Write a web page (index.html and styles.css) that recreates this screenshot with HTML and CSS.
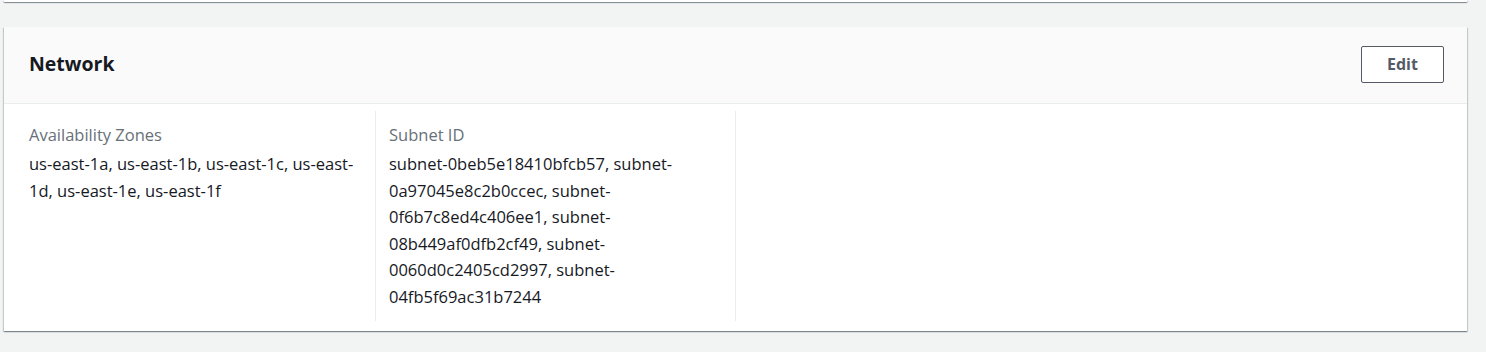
FILE: index.html
```html
<!DOCTYPE html>
<html lang="en">
<head>
<meta charset="utf-8">
<title>Network</title>
<link rel="stylesheet" href="styles.css">
</head>
<body>
<div class="page">
  <div class="prev-card"></div>
  <section class="card">
    <header class="card-header">
      <h2 class="card-title">Network</h2>
      <button class="btn" type="button">Edit</button>
    </header>
    <div class="card-body">
      <div class="col">
        <div class="label">Availability Zones</div>
        <div class="value">us-east-1a, us-east-1b, us-east-1c, us-east-1d, us-east-1e, us-east-1f</div>
      </div>
      <div class="col">
        <div class="label">Subnet ID</div>
        <div class="value">subnet-0beb5e18410bfcb57, subnet-0a97045e8c2b0ccec, subnet-0f6b7c8ed4c406ee1, subnet-08b449af0dfb2cf49, subnet-0060d0c2405cd2997, subnet-04fb5f69ac31b7244</div>
      </div>
      <div class="col"></div>
    </div>
  </section>
</div>
</body>
</html>
```

FILE: styles.css
```css
* { box-sizing: border-box; }
html, body { margin: 0; padding: 0; }
body {
  background: #f2f3f3;
  font-family: "Open Sans", "Noto Sans", sans-serif;
  color: #16191f;
  width: 1486px;
  height: 352px;
  overflow: hidden;
}
.page {
  padding: 0 19px 0 4px;
}
.prev-card {
  height: 2px;
  background: #fff;
  box-shadow: 0 1px 1px 0 rgba(0,28,36,.3), 1px 1px 1px 0 rgba(0,28,36,.15), -1px 1px 1px 0 rgba(0,28,36,.15);
}
.card {
  margin-top: 25px;
  background: #fff;
  box-shadow: 0 1px 1px 0 rgba(0,28,36,.3), 1px 1px 1px 0 rgba(0,28,36,.15), -1px 1px 1px 0 rgba(0,28,36,.15);
}
.card-header {
  display: flex;
  align-items: center;
  justify-content: space-between;
  height: 77px;
  padding: 0 23px 2px 25px;
  background: #fafafa;
  border-bottom: 1px solid #eaeded;
}
.card-title {
  margin: 0;
  font-size: 19.5px;
  font-weight: 700;
  line-height: 26px;
  color: #16191f;
}
.btn {
  width: 83px;
  height: 37px;
  border: 1px solid #545b64;
  border-radius: 2px;
  background: #fff;
  color: #545b64;
  font-family: inherit;
  font-size: 16px;
  font-weight: 700;
  padding: 0;
}
.card-body {
  display: grid;
  grid-template-columns: repeat(3, 360px);
  padding: 7px 0 10px 11px;
}
.col {
  padding: 11px 14px 4px 14px;
  min-height: 210px;
}
.col + .col {
  border-left: 1px solid #eaeded;
  padding-left: 13px;
}
.label {
  font-size: 16.5px;
  line-height: 26px;
  color: #687078;
  margin-bottom: 3px;
}
.value {
  font-size: 16.5px;
  line-height: 26.6px;
  color: #16191f;
}
```
